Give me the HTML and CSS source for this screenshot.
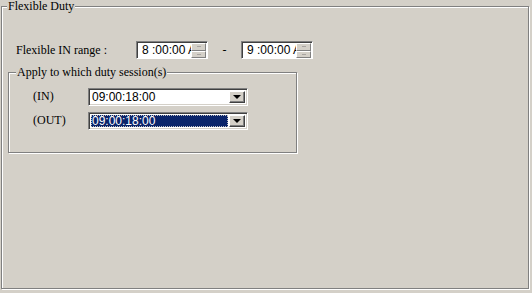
FILE: index.html
```html
<!DOCTYPE html>
<html>
  <head>
    <meta charset="UTF-8">
    <title>Flexible Duty</title>
    <link rel="stylesheet" href="styles.css">
  </head>
  <body>
    <fieldset class="group outer">
      <legend>Flexible Duty</legend>
      <div class="range_row">
        <span class="range_label">Flexible IN range :</span>
        <div class="spin">
          <span class="spin_text">8 :00:00 AM</span>
          <div class="spin_btns"><span class="up"></span><span class="down"></span></div>
        </div>
        <span class="dash">-</span>
        <div class="spin">
          <span class="spin_text">9 :00:00 AM</span>
          <div class="spin_btns"><span class="up"></span><span class="down"></span></div>
        </div>
      </div>
      <fieldset class="group inner">
        <legend>Apply to which duty session(s)</legend>
        <div class="combo_row">
          <span class="combo_label">(IN)</span>
          <div class="combo">
            <span class="combo_text">09:00:18:00</span>
            <span class="combo_btn"><i class="arrow"></i></span>
          </div>
        </div>
        <div class="combo_row">
          <span class="combo_label">(OUT)</span>
          <div class="combo">
            <span class="combo_text selected">09:00:18:00</span>
            <span class="combo_btn"><i class="arrow"></i></span>
          </div>
        </div>
      </fieldset>
    </fieldset>
  </body>
</html>
```

FILE: styles.css
```css
*{
  box-sizing: border-box;
}
body{
  margin: 0;
  background: #d4d0c8;
  font-family: "Liberation Serif", serif;
  font-size: 12px;
  color: #000;
  height: 293px;
  overflow: hidden;
}
.group{
  border: 1px solid #808080;
  box-shadow: inset 1px 1px 0 #fff, 1px 1px 0 #fff;
  margin: 0;
}
.group legend{
  padding: 0 1px;
  line-height: 13px;
  background: #d4d0c8;
}
.outer{
  margin-left: 1px;
  width: 528px;
  height: 289px;
  padding: 28px 0 0 6px;
}
.outer > legend{
  margin-left: -1px;
}
.range_row{
  display: flex;
  align-items: center;
  padding-left: 8px;
}
.range_label{
  width: 120px;
  padding-top: 1px;
}
.dash{
  width: 33px;
  text-align: center;
}
.spin{
  display: flex;
  width: 72px;
  height: 18px;
  background: #fff;
  border-top: 1px solid #808080;
  border-left: 1px solid #808080;
  border-right: 1px solid #fff;
  border-bottom: 1px solid #fff;
  box-shadow: inset 1px 1px 0 #404040;
  overflow: hidden;
}
.spin_text{
  flex: 1;
  overflow: hidden;
  white-space: nowrap;
  font-family: "Liberation Sans", sans-serif;
  font-size: 12px;
  line-height: 15px;
  padding: 1px 0 0 5px;
}
.spin_btns{
  width: 16px;
  display: flex;
  flex-direction: column;
  padding: 1px 1px 0 0;
}
.spin_btns span{
  flex: 1;
  background: #d4d0c8;
  border-top: 1px solid #fff;
  border-left: 1px solid #fff;
  border-bottom: 1px solid #808080;
  border-right: 1px solid #808080;
  position: relative;
}
.spin_btns span::after{
  content: "";
  position: absolute;
  left: 5px;
  top: 2px;
  width: 4px;
  height: 1px;
  background: #a8a4a0;
}
.inner{
  margin-top: 7px;
  width: 289px;
  height: 87px;
  padding: 9px 0 0 24px;
}
.inner > legend{
  margin-left: -17px;
}
.combo_row{
  display: flex;
  align-items: center;
  margin-bottom: 6px;
}
.combo_label{
  width: 55px;
  line-height: 14px;
  padding-bottom: 3px;
}
.combo{
  display: flex;
  width: 160px;
  height: 18px;
  background: #fff;
  border-top: 1px solid #808080;
  border-left: 1px solid #808080;
  border-right: 1px solid #fff;
  border-bottom: 1px solid #fff;
  box-shadow: inset 1px 1px 0 #404040, inset -1px -1px 0 #d4d0c8;
  padding: 2px 2px 2px 2px;
}
.combo_text{
  flex: 1;
  font-family: "Liberation Sans", sans-serif;
  font-size: 12px;
  line-height: 12px;
  padding-left: 1px;
  margin-right: 1px;
}
.combo_text.selected{
  background: #0a246a;
  color: #fff;
  outline: 1px dotted #c0c0c0;
  outline-offset: -1px;
}
.combo_btn{
  width: 16px;
  background: #d4d0c8;
  border-top: 1px solid #fff;
  border-left: 1px solid #fff;
  border-right: 1px solid #404040;
  border-bottom: 1px solid #404040;
  box-shadow: inset -1px -1px 0 #808080;
  display: flex;
  align-items: center;
  justify-content: center;
}
.arrow{
  width: 0;
  height: 0;
  border-left: 4px solid transparent;
  border-right: 4px solid transparent;
  border-top: 4px solid #000;
}
```
